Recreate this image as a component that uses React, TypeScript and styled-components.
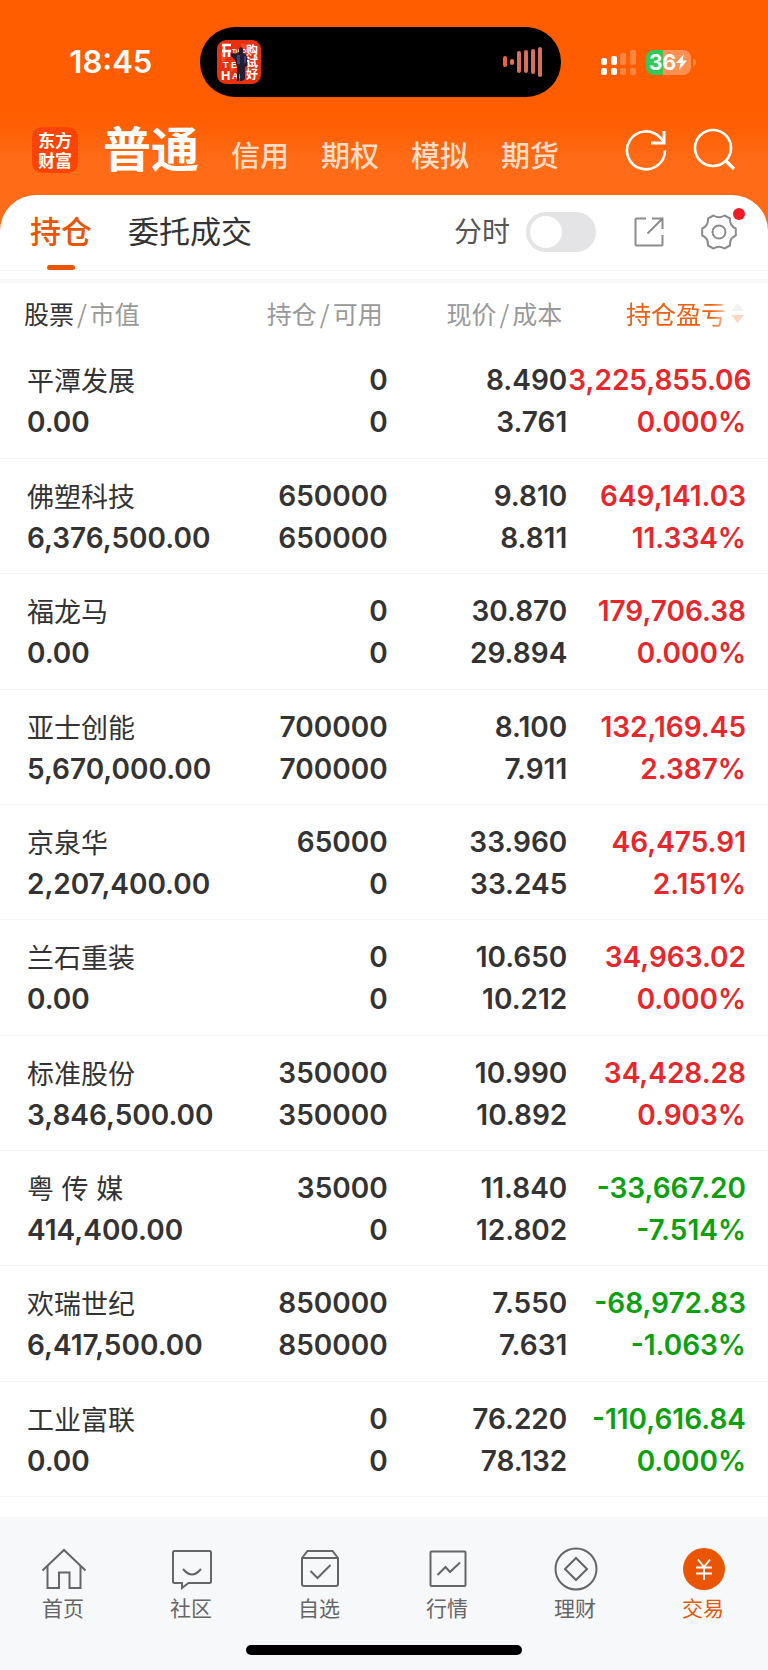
import React from 'react';
import styled, { createGlobalStyle } from 'styled-components';

const BRAND = '#ea5504';
const RED = '#e8262b';
const GREEN = '#0aa00e';
const INK = '#333333';

const GlobalStyle = createGlobalStyle`
  *, *::before, *::after { box-sizing: border-box; }
  body {
    margin: 0;
    background: #ffffff;
    color: ${INK};
    font-family: Inter, "Noto Sans CJK SC", sans-serif;
  }
  button {
    margin: 0;
    padding: 0;
    border: 0;
    background: none;
    color: inherit;
    font: inherit;
    cursor: pointer;
  }
  a { color: inherit; text-decoration: none; }
  svg { display: block; flex: none; }
`;

const Page = styled.div`
  display: flex;
  flex-direction: column;
  min-height: 100vh;
`;

const Hero = styled.header`
  padding: 27px 0 36px;
  margin-bottom: -36px;
  background: linear-gradient(#ff5d00 0, #ff5d00 118px, #ff6b16 160px, #ff6d1a 100%);
`;

const StatusBar = styled.div`
  display: grid;
  grid-template-columns: 26% 47% 27%;
  align-items: center;
`;

const Time = styled.time`
  padding-left: 22px;
  color: #ffffff;
  font-size: 31px;
  font-weight: 600;
  line-height: 40px;
  text-align: center;
`;

const Island = styled.div`
  display: flex;
  align-items: center;
  justify-content: space-between;
  height: 70px;
  padding: 0 18px 0 17px;
  border-radius: 35px;
  background: #000000;
`;

const StatusIcons = styled.div`
  display: flex;
  align-items: center;
  gap: 10px;
  padding-left: 40px;
`;

const Battery = styled.span`
  position: relative;
  display: flex;
  align-items: center;
  justify-content: center;
  width: 45px;
  height: 25px;
  border-radius: 8px;
  background: linear-gradient(90deg, #34c759 0, #34c759 38%, #ff9054 38%);
  color: #ffffff;
  font-size: 21px;
  font-weight: 700;
  line-height: 25px;

  &::after {
    content: "";
    position: absolute;
    left: 47px;
    top: 9px;
    width: 3px;
    height: 7px;
    border-radius: 0 4px 4px 0;
    background: #ff8748;
  }
`;

const AccountBar = styled.div`
  display: flex;
  align-items: center;
  height: 98px;
  padding: 8px 31px 0 32px;
  color: #ffffff;
`;

const Logo = styled.a`
  display: flex;
  flex-direction: column;
  align-items: center;
  justify-content: center;
  width: 46px;
  height: 46px;
  border-radius: 10px;
  background: #ff4400;
  font-family: "Noto Sans CJK SC", sans-serif;
  font-size: 17px;
  font-weight: 700;
  line-height: 20px;
`;

const Accounts = styled.nav`
  display: flex;
  flex: 1;
  align-items: baseline;
  gap: 32px;
  padding-top: 7px;
  margin-left: 25px;
`;

const Account = styled.a<{ $active?: boolean }>`
  font-size: ${(p) => (p.$active ? 48 : 29)}px;
  font-weight: ${(p) => (p.$active ? 700 : 500)};
  line-height: 56px;
  color: ${(p) => (p.$active ? '#ffffff' : '#ffdcc8')};
  white-space: nowrap;
`;

const HeroActions = styled.div`
  display: flex;
  gap: 25px;
`;

const Sheet = styled.main`
  display: flex;
  flex: 1;
  flex-direction: column;
  padding-bottom: 20px;
  border-radius: 36px 36px 0 0;
  background: #ffffff;
`;

const Toolbar = styled.div`
  display: flex;
  align-items: stretch;
  height: 76px;
  padding: 0 31px 0 30px;
  border-bottom: 1px solid #f5f5f5;
`;

const Tab = styled.button<{ $active?: boolean }>`
  display: flex;
  flex-direction: column;
  align-items: center;
  padding-top: 16px;
  margin-right: 36px;
  color: ${(p) => (p.$active ? BRAND : INK)};
  font-size: 31px;
  font-weight: ${(p) => (p.$active ? 500 : 400)};
  line-height: 42px;

  &::after {
    content: "";
    width: 28px;
    height: 6px;
    margin-top: 12px;
    border-radius: 3px;
    background: ${(p) => (p.$active ? BRAND : 'transparent')};
  }
`;

const Tools = styled.div`
  display: flex;
  align-items: center;
  height: 74px;
  margin-left: auto;
  color: #8c8c8c;
`;

const SwitchLabel = styled.label`
  display: flex;
  align-items: center;
  gap: 16px;
  margin-right: 38px;
  color: #555555;
  font-size: 28px;
  line-height: 40px;
`;

const Switch = styled.input`
  appearance: none;
  width: 70px;
  height: 40px;
  margin: 0;
  padding: 4px;
  border-radius: 20px;
  background: #e4e4e6;
  cursor: pointer;

  &::before {
    content: "";
    display: block;
    width: 32px;
    height: 32px;
    border-radius: 50%;
    background: #ffffff;
  }
  &:checked { background: ${BRAND}; }
  &:checked::before { margin-left: auto; }
`;

const SettingsButton = styled.button`
  position: relative;
  margin-left: 37px;

  &::after {
    content: "";
    position: absolute;
    top: -6px;
    right: -8px;
    width: 12px;
    height: 12px;
    border-radius: 50%;
    background: #ee1c25;
  }
`;

const Divider = styled.div`
  height: 4px;
  margin-top: 8px;
  background: #f7f7f7;
`;

const TableArea = styled.div`
  display: flex;
  flex: 1;
`;

const Table = styled.table`
  width: 100%;
  table-layout: fixed;
  border-collapse: collapse;
`;

const Col = styled.col<{ $share: number }>`
  width: ${(p) => p.$share}%;
`;

const Head = styled.th<{ $kind: 'name' | 'qty' | 'price' | 'profit' }>`
  height: 60px;
  padding: 0 ${(p) => ({ name: 0, qty: 9, price: 6, profit: 23 })[p.$kind]}px 0
    ${(p) => (p.$kind === 'name' ? 24 : 0)}px;
  color: #999999;
  font-family: "Noto Sans CJK SC", sans-serif;
  font-size: 25px;
  font-weight: 400;
  line-height: 36px;
  text-align: ${(p) => (p.$kind === 'name' ? 'left' : 'right')};
  white-space: nowrap;
`;

const HeadMain = styled.span`
  color: ${INK};
`;

const Slash = styled.span`
  margin: 0 3px;
`;

const SortButton = styled.button`
  display: inline-flex;
  align-items: center;
  gap: 4px;
  color: #f06010;
  vertical-align: top;
  mask-image: linear-gradient(90deg, #000 72%, rgba(0, 0, 0, 0.25) 86%);
`;

const Row = styled.tr`
  border-bottom: 1px solid #f4f4f4;
`;

const Cell = styled.td<{ $kind: 'name' | 'qty' | 'price' | 'profit'; $tone?: string }>`
  height: 115px;
  padding: 16px ${(p) => ({ name: 0, qty: 4, price: 1, profit: 22 })[p.$kind]}px 14px
    ${(p) => (p.$kind === 'name' ? 27 : 0)}px;
  color: ${(p) => p.$tone ?? INK};
  font-size: 28px;
  font-weight: 600;
  line-height: 42px;
  text-align: ${(p) => (p.$kind === 'name' ? 'left' : 'right')};
  vertical-align: top;
  white-space: nowrap;
`;

const Line = styled.div``;

const StockName = styled.div`
  padding-top: 4px;
  font-size: 27px;
  font-weight: 400;
  line-height: 38px;
`;

const TabBar = styled.footer`
  display: flex;
  flex-direction: column;
  align-items: center;
  padding-bottom: 15px;
  background: #f7f8fa;
`;

const TabLinks = styled.nav`
  display: grid;
  grid-template-columns: repeat(6, 1fr);
  width: 100%;
  padding: 28px 0 21px;
`;

const TabLink = styled.a<{ $active?: boolean }>`
  display: flex;
  flex-direction: column;
  align-items: center;
  gap: 1px;
  color: ${(p) => (p.$active ? BRAND : '#666666')};
  font-size: 21px;
  line-height: 30px;
`;

const TabName = styled.span`
  padding-right: 2px;
`;

const HomeIndicator = styled.div`
  width: 36%;
  height: 10px;
  border-radius: 5px;
  background: #000000;
`;

const AlbumArt = () => (
  <svg width="44" height="44" viewBox="0 0 44 44" role="img" aria-label="专辑封面">
    <rect width="44" height="44" rx="9" fill="#e6300f" />
    <path d="M4 12l6 4-5 8zM24 3l6 2-4 6zM12 24l8 2-6 6zM36 30l5 4-4 6z" fill="#f4501d" />
    <path d="M5 5h9M5 11h9M7 6v11M12 11v6" stroke="#ffffff" strokeWidth="2.500" fill="none" />
    <g fill="#ffffff" fontFamily="'Liberation Sans', 'Noto Sans CJK SC', sans-serif" fontWeight="700">
      <text x="15" y="13" fontSize="6">TiAO</text>
      <text x="6" y="28" fontSize="9">T E</text>
      <text x="4" y="40" fontSize="13">H</text>
      <text x="15" y="39" fontSize="9">AO</text>
      <text fontSize="12">
        <tspan x="29" y="15">购</tspan>
        <tspan x="29" y="27">试</tspan>
        <tspan x="29" y="39">好</tspan>
      </text>
    </g>
    <path d="M22 8q3-2 4 1l0 4q4 1 4 6l0 7-2 1 0 12-3 2-2 0 0-11-1 11-2 0 0-15-2-6-4-4 0-3 5 1q1-2 3-2z" fill="#231d2e" />
    <path d="M20 15h3v9h-3zM27 16h2v7h-2z" fill="#35408a" />
  </svg>
);

const Waveform = () => (
  <svg width="40" height="32" viewBox="0 0 40 32" aria-hidden="true">
    <g strokeWidth="4" strokeLinecap="round">
      <path d="M2 12v7" stroke="#f0643c" />
      <path d="M9 15v2" stroke="#e87050" />
      <path d="M16 7v18M23 6v19M30 5v21M37 3v26" stroke="#d9705a" />
    </g>
  </svg>
);

const Signal = () => (
  <svg width="35" height="25" viewBox="0 0 35 25" aria-hidden="true">
    <g fill="#ffffff">
      <rect x="0" y="8" width="6" height="7" rx="2" />
      <rect x="10" y="6" width="6" height="9" rx="2" />
      <rect x="0" y="18" width="6" height="7" rx="2" />
      <rect x="10" y="18" width="6" height="7" rx="2" />
      <g opacity="0.25">
        <rect x="19" y="3" width="6" height="12" rx="2" />
        <rect x="29" y="0" width="6" height="15" rx="2" />
        <rect x="19" y="18" width="6" height="7" rx="2" />
        <rect x="29" y="18" width="6" height="7" rx="2" />
      </g>
    </g>
  </svg>
);

const Bolt = () => (
  <svg width="11" height="16" viewBox="0 0 11 16" aria-hidden="true">
    <path d="M8 0L0 9h4.500L3 16l8-9.500H6.500z" fill="#ffffff" />
  </svg>
);

const RefreshIcon = () => (
  <svg width="44" height="44" viewBox="0 0 44 44" fill="none" stroke="#ffffff" strokeWidth="2.600">
    <path d="M41 22.500A19 19 0 1 1 36 9.500L40 14" />
    <path d="M40 3v12H27" strokeWidth="3" />
  </svg>
);

const SearchIcon = () => (
  <svg width="44" height="44" viewBox="0 0 44 44" fill="none" stroke="#ffffff" strokeWidth="2.600">
    <circle cx="20" cy="20" r="18" />
    <path d="M32.500 32.500L41 41" strokeWidth="3.200" />
  </svg>
);

const ShareIcon = () => (
  <svg width="30" height="30" viewBox="0 0 30 30" fill="none" stroke="currentColor" strokeWidth="2">
    <path d="M12 1.500H2.500q-1 0-1 1v25q0 1 1 1h25q1 0 1-1V18" />
    <path d="M18 1.500h10.500V12M28 2L13.500 16.500" />
  </svg>
);

const GearIcon = () => (
  <svg width="36" height="36" viewBox="0 0 36 36" fill="none" stroke="currentColor" strokeWidth="2" strokeLinejoin="round">
    <path d="M12.500 1.500Q18 5 23.500 1.500L29 4.500Q28.500 12 34.800 14.500V21.500Q28.500 24 29 31.500L23.500 34.500Q18 31 12.500 34.500L7 31.500Q7.500 24 1.200 21.500V14.500Q7.500 12 7 4.500Z" />
    <circle cx="18" cy="18" r="6.500" />
  </svg>
);

const SortIcon = () => (
  <svg width="15" height="22" viewBox="0 0 15 22" aria-hidden="true">
    <path d="M7.500 1L14 9H1z" fill="#cccccc" />
    <path d="M7.500 21L14 13H1z" fill="#f06010" />
  </svg>
);

const icons: Record<string, React.ReactNode> = {
  首页: (
    <>
      <path d="M2.500 25.500L24 5l21.500 20.500" />
      <path d="M7.500 21V43H19V27.500h10.500V43H40.500V21" />
    </>
  ),
  社区: (
    <>
      <path d="M6.500 6h35q1.500 0 1.500 1.500v29q0 1.500-1.500 1.500H20.500L14 43v-5H6.500Q5 38 5 36.500v-29Q5 6 6.500 6z" />
      <path d="M15 24q9 11 18 0" />
    </>
  ),
  自选: (
    <>
      <path d="M6 13l5.500-7h25l5.500 7v26q0 2-2 2H8q-2 0-2-2zM6 13h36" />
      <path d="M14.500 26l7 7L34.500 20" />
    </>
  ),
  行情: (
    <>
      <rect x="6.500" y="6.500" width="35" height="34.500" rx="1" />
      <path d="M13.500 30l8-8 4.500 5L36 17.500" />
    </>
  ),
  理财: (
    <>
      <circle cx="24" cy="24" r="20.500" />
      <path d="M24 13l11 11-11 11-11-11z" />
    </>
  ),
  交易: (
    <>
      <circle cx="24" cy="24" r="21" fill={BRAND} stroke="none" />
      <path d="M18 14.500l6 7.500 6-7.500M24 22v13M16 22.500h16M16 28.500h16" stroke="#ffffff" />
    </>
  ),
};

type Holding = [string, string, string, string, string, string, string, string];

const holdings: Holding[] = [
  ['平潭发展', '0.00', '0', '0', '8.490', '3.761', '3,225,855.06', '0.000%'],
  ['佛塑科技', '6,376,500.00', '650000', '650000', '9.810', '8.811', '649,141.03', '11.334%'],
  ['福龙马', '0.00', '0', '0', '30.870', '29.894', '179,706.38', '0.000%'],
  ['亚士创能', '5,670,000.00', '700000', '700000', '8.100', '7.911', '132,169.45', '2.387%'],
  ['京泉华', '2,207,400.00', '65000', '0', '33.960', '33.245', '46,475.91', '2.151%'],
  ['兰石重装', '0.00', '0', '0', '10.650', '10.212', '34,963.02', '0.000%'],
  ['标准股份', '3,846,500.00', '350000', '350000', '10.990', '10.892', '34,428.28', '0.903%'],
  ['粤 传 媒', '414,400.00', '35000', '0', '11.840', '12.802', '-33,667.20', '-7.514%'],
  ['欢瑞世纪', '6,417,500.00', '850000', '850000', '7.550', '7.631', '-68,972.83', '-1.063%'],
  ['工业富联', '0.00', '0', '0', '76.220', '78.132', '-110,616.84', '0.000%'],
];

export default function App() {
  return (
    <Page>
      <GlobalStyle />
      <Hero>
        <StatusBar>
          <Time>18:45</Time>
          <Island>
            <AlbumArt />
            <Waveform />
          </Island>
          <StatusIcons>
            <Signal />
            <Battery>
              36
              <Bolt />
            </Battery>
          </StatusIcons>
        </StatusBar>
        <AccountBar>
          <Logo href="#home">
            <span>东方</span>
            <span>财富</span>
          </Logo>
          <Accounts>
            <Account href="#normal" $active>普通</Account>
            {['信用', '期权', '模拟', '期货'].map((name) => (
              <Account key={name} href={`#${name}`}>{name}</Account>
            ))}
          </Accounts>
          <HeroActions>
            <button type="button" aria-label="刷新"><RefreshIcon /></button>
            <button type="button" aria-label="搜索"><SearchIcon /></button>
          </HeroActions>
        </AccountBar>
      </Hero>

      <Sheet>
        <Toolbar>
          <Tab type="button" $active>持仓</Tab>
          <Tab type="button">委托成交</Tab>
          <Tools>
            <SwitchLabel>
              分时
              <Switch type="checkbox" />
            </SwitchLabel>
            <button type="button" aria-label="分享"><ShareIcon /></button>
            <SettingsButton type="button" aria-label="设置"><GearIcon /></SettingsButton>
          </Tools>
        </Toolbar>
        <Divider />
        <TableArea>
          <Table>
            <colgroup>
              <Col $share={26} />
              <Col $share={25} />
              <Col $share={23} />
              <Col $share={26} />
            </colgroup>
            <thead>
              <tr>
                <Head $kind="name" scope="col"><HeadMain>股票</HeadMain><Slash>/</Slash>市值</Head>
                <Head $kind="qty" scope="col">持仓<Slash>/</Slash>可用</Head>
                <Head $kind="price" scope="col">现价<Slash>/</Slash>成本</Head>
                <Head $kind="profit" scope="col">
                  <SortButton type="button">持仓盈亏<SortIcon /></SortButton>
                </Head>
              </tr>
            </thead>
            <tbody>
              {holdings.map(([name, value, qty, usable, price, cost, profit, rate]) => {
                const tone = profit.startsWith('-') ? GREEN : RED;
                return (
                  <Row key={name}>
                    <Cell $kind="name"><StockName>{name}</StockName><Line>{value}</Line></Cell>
                    <Cell $kind="qty"><Line>{qty}</Line><Line>{usable}</Line></Cell>
                    <Cell $kind="price"><Line>{price}</Line><Line>{cost}</Line></Cell>
                    <Cell $kind="profit" $tone={tone}><Line>{profit}</Line><Line>{rate}</Line></Cell>
                  </Row>
                );
              })}
            </tbody>
          </Table>
        </TableArea>
      </Sheet>

      <TabBar>
        <TabLinks>
          {Object.entries(icons).map(([name, drawing]) => (
            <TabLink key={name} href={`#${name}`} $active={name === '交易'}>
              <svg width="48" height="48" viewBox="0 0 48 48" fill="none" stroke="currentColor" strokeWidth="2" aria-hidden="true">
                {drawing}
              </svg>
              <TabName>{name}</TabName>
            </TabLink>
          ))}
        </TabLinks>
        <HomeIndicator />
      </TabBar>
    </Page>
  );
}
